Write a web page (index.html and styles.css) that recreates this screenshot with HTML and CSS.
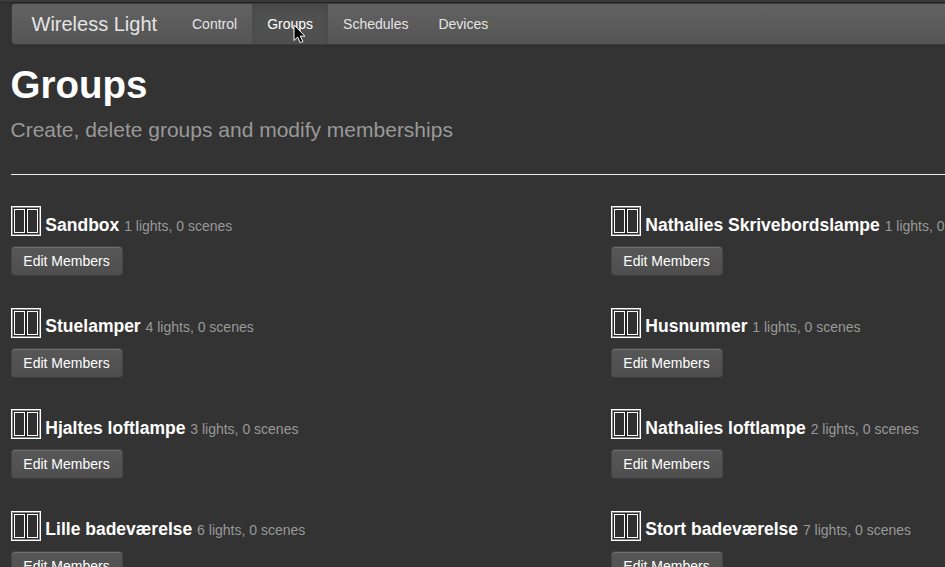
FILE: index.html
```html
<!DOCTYPE html>
<html lang="en">
<head>
<meta charset="utf-8">
<title>Wireless Light</title>
<link rel="stylesheet" href="styles.css">
</head>
<body>
<svg class="symbols" aria-hidden="true">
  <symbol id="window" viewBox="0 0 30 30">
    <rect x=".5" y=".5" width="29" height="29" fill="#2c2c2c" stroke="#fff"/>
    <rect x="1.5" y="1.5" width="27" height="27" fill="none" stroke="#888"/>
    <rect x="3.5" y="3.5" width="10" height="23" fill="#303030" stroke="#fff"/>
    <rect x="16.5" y="3.5" width="10" height="23" fill="#303030" stroke="#fff"/>
    <path d="M15 2v26" stroke="#222" stroke-width="2"/>
  </symbol>
</svg>
<div class="top-edge"></div>
<nav class="navbar">
  <a class="brand">Wireless Light</a>
  <a class="nav-link">Control</a>
  <a class="nav-link active">Groups
    <svg class="pointer" width="14" height="20" viewBox="0 0 14 20"><path d="M1 1v15.5l3.6-3.4 2.6 5.6 2.7-1.2-2.6-5.4h4.6z" fill="#000" stroke="#fff" stroke-width="1"/></svg>
  </a>
  <a class="nav-link">Schedules</a>
  <a class="nav-link">Devices</a>
</nav>
<header class="page-header">
  <h1>Groups</h1>
  <p class="lead">Create, delete groups and modify memberships</p>
</header>
<main class="groups">
  <section class="group"><h4><svg class="icon"><use href="#window"/></svg><span>Sandbox <small>1 lights, 0 scenes</small></span></h4><button class="btn">Edit Members</button></section>
  <section class="group"><h4><svg class="icon"><use href="#window"/></svg><span>Nathalies Skrivebordslampe <small>1 lights, 0 scenes</small></span></h4><button class="btn">Edit Members</button></section>
  <section class="group"><h4><svg class="icon"><use href="#window"/></svg><span>Stuelamper <small>4 lights, 0 scenes</small></span></h4><button class="btn">Edit Members</button></section>
  <section class="group"><h4><svg class="icon"><use href="#window"/></svg><span>Husnummer <small>1 lights, 0 scenes</small></span></h4><button class="btn">Edit Members</button></section>
  <section class="group"><h4><svg class="icon"><use href="#window"/></svg><span>Hjaltes loftlampe <small>3 lights, 0 scenes</small></span></h4><button class="btn">Edit Members</button></section>
  <section class="group"><h4><svg class="icon"><use href="#window"/></svg><span>Nathalies loftlampe <small>2 lights, 0 scenes</small></span></h4><button class="btn">Edit Members</button></section>
  <section class="group"><h4><svg class="icon"><use href="#window"/></svg><span>Lille badeværelse <small>6 lights, 0 scenes</small></span></h4><button class="btn">Edit Members</button></section>
  <section class="group"><h4><svg class="icon"><use href="#window"/></svg><span>Stort badeværelse <small>7 lights, 0 scenes</small></span></h4><button class="btn">Edit Members</button></section>
</main>
</body>
</html>
```
FILE: styles.css
```css
* { box-sizing: border-box; }
html { overflow: hidden; }
body {
  margin: 0;
  height: 567px;
  overflow: hidden;
  background: #333;
  color: #fff;
  font: 14px/20px "Liberation Sans", Arial, sans-serif;
}
.symbols { display: none; }
.top-edge {
  height: 3px;
  background: #3a3a3a;
  border-bottom: 1px solid #262626;
}
.navbar {
  display: flex;
  width: 1170px;
  height: 42px;
  margin-left: 11px;
  border: 1px solid #3a3a3a;
  border-radius: 4px;
  background: linear-gradient(#626262, #545454);
  box-shadow: 0 1px 4px rgba(0, 0, 0, .07);
}
.brand {
  width: 165px;
  padding: 10px 0 10px 19.5px;
  font-size: 20px;
  color: #e4e4e4;
  white-space: nowrap;
}
.nav-link {
  padding: 10px 15px;
  color: #e4e4e4;
}
.nav-link.active {
  position: relative;
  background: #505050;
  color: #fff;
  box-shadow: inset 0 3px 8px rgba(0, 0, 0, .125);
}
.pointer {
  position: absolute;
  left: 41px;
  top: 20px;
  z-index: 1;
}
.page-header {
  width: 1170px;
  height: 130px;
  margin-left: 10.5px;
  padding-top: 20px;
  border-bottom: 1px solid #eee;
}
h1 {
  margin: 0;
  font-size: 38.5px;
  line-height: 40px;
}
.lead {
  margin: 10px 0 0;
  font-size: 21px;
  line-height: 30px;
  color: #999;
}
.groups {
  display: grid;
  grid-template-columns: 600px 600px;
  grid-auto-rows: 101.5px;
  margin: 31px 0 0 10.5px;
}
h4 {
  display: flex;
  gap: 4.86px;
  margin: 0 0 10px;
  font-size: 17.5px;
  line-height: 20px;
  white-space: nowrap;
}
h4 span { padding-top: 8.75px; }
.icon {
  flex: none;
  width: 30px;
  height: 30px;
}
small {
  font-size: 14px;
  font-weight: normal;
  color: #999;
}
.btn {
  display: block;
  width: 112px;
  height: 30px;
  padding: 0;
  border: 1px solid #404040;
  border-color: #444 #444 #3a3a3a;
  border-radius: 4px;
  background: linear-gradient(#575757, #4e4e4e);
  box-shadow: inset 0 1px 0 #707070;
  color: #fff;
  font: 14px/20px "Liberation Sans", Arial, sans-serif;
}
```
